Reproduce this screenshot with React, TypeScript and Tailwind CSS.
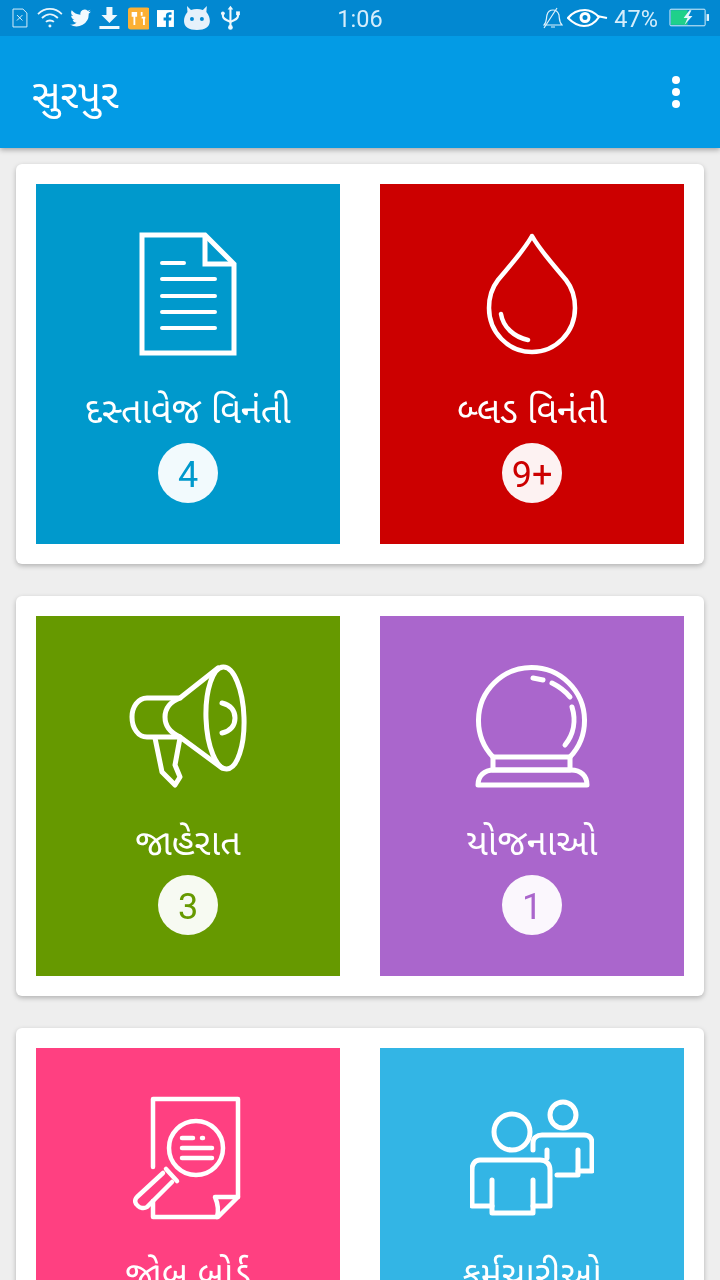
import React from "react";

const S = { fill: "none", stroke: "white", strokeWidth: 5, strokeLinejoin: "round" as const, strokeLinecap: "round" as const };

function Slot({ children }: { children: React.ReactNode }) {
  return (
    <svg width="124" height="124" viewBox="0 0 124 124" {...S} className="block">
      {children}
    </svg>
  );
}

const DocIcon = () => (
  <Slot>
    <g strokeLinecap="butt" strokeLinejoin="miter">
      <path d="M16 3H79L108 32V121H16Z" />
      <path d="M79 3V32H108" />
    </g>
    <g strokeWidth="4">
      <path d="M36 31H58M36 47H89M36 64H89M36 80H89M36 96H89" />
    </g>
  </Slot>
);

const DropIcon = () => (
  <Slot>
    <path d="M62 4C53 20 36 38 28 48C21 57 19 66 19 76C19 100 38 120 62 120C86 120 105 100 105 76C105 66 103 57 96 48C88 38 71 20 62 4Z" strokeWidth="4.500" />
    <path d="M31 82C33 95 44 105 58 108" strokeWidth="4.500" />
  </Slot>
);

const MegaphoneIcon = () => (
  <Slot>
    <ellipse cx="99" cy="54" rx="19" ry="51" transform="rotate(-2 99 54)" />
    <path d="M92 4L54 34C44 38 39 45 39 53C39 62 45 69 54 73L96 104" />
    <path d="M54 34H21C12 34 6 43 6 53C6 64 12 73 21 73H54" />
    <path d="M29 74L36 108L49 121L54 113L49 101L54 74" />
    <path d="M96 39C105 41 109 47 109 54C109 61 105 67 96 69" />
  </Slot>
);

const GlobeIcon = () => (
  <Slot>
    <path d="M23 93A53 53 0 1 1 100 93" />
    <path d="M23 93H100V106H23Z" />
    <path d="M8 121C8 112 14 106 24 106H101C111 106 117 112 117 121Z" />
    <path d="M63 14L73 16M82 19C90 23 96 28 100 33M102 43C106 56 104 70 95 81" />
  </Slot>
);

const JobIcon = () => (
  <Slot>
    <g strokeWidth="4.500">
      <path d="M27 71V3H112V101L92 121H27V105" />
      <path d="M112 101H89C92 108 93 114 91 121" />
      <circle cx="70" cy="52" r="27" />
      <path d="M56 42H67M76 42H77M56 52H86M56 62H86" />
      <path d="M37 77L11 101C8 104 9 108 12 110C14 112 18 113 21 111L46 86" />
      <path d="M40 73L51 85" />
    </g>
  </Slot>
);

const PeopleIcon = () => (
  <Slot>
    <circle cx="42" cy="36" r="18" />
    <circle cx="93" cy="19" r="13" />
    <path d="M22 110H2V74C2 68 5 64 10 64H70C76 64 80 68 80 74V110H63" />
    <path d="M22 84V117H63V84" />
    <path d="M63 54V47C63 42 67 39 72 39H114C119 39 122 42 122 47V75H108" />
    <path d="M108 54V79H87M77 54V62" />
  </Slot>
);

function Tile({ color, text, label, badge, icon }: { color: string; text: string; label: string; badge?: string; icon: React.ReactNode }) {
  return (
    <div className={`${color} h-[360px] flex flex-col items-center pt-[48px]`}>
      {icon}
      <div className="mt-[29px] h-[60px] text-[36px] leading-[60px] text-white whitespace-nowrap">{label}</div>
      {badge && (
        <div className={`-mt-[2px] w-[60px] h-[60px] rounded-full bg-white/95 flex items-center justify-center pt-[3px] text-[36px] leading-none font-['Roboto',sans-serif] ${text}`}>
          {badge}
        </div>
      )}
    </div>
  );
}

function Card({ children }: { children: React.ReactNode }) {
  return (
    <div className="bg-white rounded-[6px] shadow-[0_2px_5px_rgba(0,0,0,0.25)] p-[20px] grid grid-cols-2 gap-[40px]">
      {children}
    </div>
  );
}

function StatusLeft() {
  return (
    <div className="flex items-center pl-[12px]">
      <svg width="16" height="20" viewBox="0 0 16 20" fill="none" stroke="#d9eefa" strokeWidth="1">
        <path d="M1 1H11L15 5V19H1Z" />
        <path d="M5 7L10.500 12.500M10.500 7L5 12.500" />
      </svg>
      <svg width="26" height="22" viewBox="0 0 26 22" fill="none" stroke="#e8f5fc" strokeWidth="1.800" className="ml-[9px]">
        <path d="M1 7C8 0 18 0 25 7M5 11C10 6 16 6 21 11M9 15C11 13 15 13 17 15" />
        <circle cx="13" cy="19" r="1.500" fill="#e8f5fc" stroke="none" />
      </svg>
      <svg width="21" height="18" viewBox="0 0 24 20" fill="#f2fafe" className="ml-[7px]">
        <path d="M24 2.400c-.9.400-1.800.7-2.800.8 1-.6 1.800-1.600 2.200-2.700-1 .6-2 1-3.100 1.200A4.900 4.900 0 0 0 12 6.200C8 6 4.400 4.100 2 1.100.7 3.300 1.300 6.200 3.500 7.700c-.8 0-1.600-.2-2.200-.6 0 2.400 1.700 4.400 3.900 4.900-.7.200-1.500.2-2.200.1.600 2 2.400 3.400 4.600 3.400A9.900 9.900 0 0 1 0 17.500 14 14 0 0 0 21.500 5c1-.7 1.800-1.600 2.500-2.600z" />
      </svg>
      <svg width="21" height="24" viewBox="0 0 20 24" fill="#eef8fd" className="ml-[8px]">
        <path d="M7 1H13V9H18L10 17L2 9H7Z" />
        <rect x="0" y="20" width="20" height="3" />
      </svg>
      <svg width="22" height="23" viewBox="0 0 24 24" className="ml-[8px]">
        <rect width="24" height="24" rx="3" fill="#fbb034" />
        <path d="M7 5V19M5 5V9H9V5M15 5V9M17.500 11V19M15 11H19" stroke="white" strokeWidth="2" fill="none" />
      </svg>
      <svg width="17" height="17" viewBox="0 0 18 18" className="ml-[8px]">
        <rect width="18" height="18" fill="white" />
        <path d="M12.500 18V11H15L15.400 8H12.500V6.500C12.500 5.500 12.900 5 14 5H15.500V2.400C14 2.200 9.500 1.700 9.500 6V8H7V11H9.500V18Z" fill="#0288d1" />
      </svg>
      <svg width="26" height="26" viewBox="0 0 26 26" className="ml-[10px]">
        <path d="M3 1L7 5C11 3.500 15 3.500 19 5L23 1L22.500 7C25 10 26 13 26 16C26 22 21 25 13 25C5 25 0 22 0 16C0 13 1 10 3.500 7Z" fill="#e6f1fb" />
        <circle cx="8" cy="14" r="2" fill="#0288d1" />
        <circle cx="18" cy="14" r="2" fill="#0288d1" />
      </svg>
      <svg width="19" height="26" viewBox="0 0 20 26" fill="none" stroke="#eef8fd" strokeWidth="2.200" className="ml-[11px]">
        <path d="M10 3V23" />
        <path d="M10 0L13 4H7Z" fill="#eef8fd" stroke="none" />
        <circle cx="10" cy="23" r="2.500" fill="#eef8fd" stroke="none" />
        <path d="M2 8V11C2 14 5 15 10 17C15 15 18 14 18 11V9" />
        <circle cx="2" cy="8" r="2" fill="#eef8fd" stroke="none" />
        <rect x="16" y="6" width="4" height="4" fill="#eef8fd" stroke="none" />
      </svg>
    </div>
  );
}

function StatusRight() {
  return (
    <div className="flex items-center pr-[10px]">
      <svg width="20" height="22" viewBox="0 0 20 22" fill="none" stroke="#e0f2fc" strokeWidth="1.200">
        <path d="M1 18C4 15 3 12 4 8C5 4 8 3 10 3C13 3 15 5 16 8C16.500 12 16 15 19 18H1Z" />
        <path d="M8 20H12M1 21L14 1" />
      </svg>
      <svg width="42" height="22" viewBox="0 0 42 22" className="ml-[4px]" fill="none" stroke="white" strokeWidth="2.200">
        <path d="M1 11C5 6 10 3 18 3C25 3 29 7 32 10C28 16 24 19 17 19C10 19 5 15 1 11Z" />
        <path d="M30 9L40 11" />
        <circle cx="18" cy="10.500" r="4" strokeWidth="3" />
      </svg>
      <span className="ml-[5px] pt-[3px] text-[23.500px] leading-none text-[#d6edfb] font-['Roboto',sans-serif]">47%</span>
      <svg width="41" height="20" viewBox="0 0 42 20" className="ml-[11px]" fill="none">
        <rect x="1" y="1" width="36" height="17" rx="1" stroke="#e0f2fc" />
        <rect x="2" y="2" width="17" height="15" fill="#1fd08a" />
        <path d="M21 2L15 10H19L16 17L24 8H20L23 2Z" fill="#e6f6fc" />
        <rect x="38.500" y="6" width="2.500" height="7" fill="#e0f2fc" />
      </svg>
    </div>
  );
}

export default function App() {
  return (
    <div className="w-[720px] h-[1280px] overflow-hidden bg-[#eeeeee] blur-[0.5px] font-['Noto_Sans_Gujarati','Noto_Sans','Lato','Liberation_Sans',sans-serif]">
      <div className="bg-[#039be5] shadow-[0_2px_5px_rgba(0,0,0,0.3)] relative">
        <div className="h-[36px] bg-[#0288d1] grid grid-cols-3 items-center">
          <StatusLeft />
          <div className="text-center pt-[3px] text-[23.500px] leading-none text-[#d6edfb] font-['Roboto',sans-serif]">1:06</div>
          <div className="flex justify-end"><StatusRight /></div>
        </div>
        <div className="h-[112px] flex items-center justify-between pl-[32px] pr-[40px]">
          <div className="text-[40px] text-white leading-none pt-[12px]">સુરપુર</div>
          <div className="flex flex-col gap-[4px]">
            <div className="w-[8px] h-[8px] rounded-full bg-white" />
            <div className="w-[8px] h-[8px] rounded-full bg-white" />
            <div className="w-[8px] h-[8px] rounded-full bg-white" />
          </div>
        </div>
      </div>
      <div className="flex flex-col gap-[32px] pt-[16px] px-[16px]">
        <Card>
          <Tile color="bg-[#0099cc]" text="text-[#0099cc]" label="દસ્તાવેજ વિનંતી" badge="4" icon={<DocIcon />} />
          <Tile color="bg-[#cc0000]" text="text-[#cc0000]" label="બ્લડ વિનંતી" badge="9+" icon={<DropIcon />} />
        </Card>
        <Card>
          <Tile color="bg-[#669900]" text="text-[#669900]" label="જાહેરાત" badge="3" icon={<MegaphoneIcon />} />
          <Tile color="bg-[#aa66cc]" text="text-[#aa66cc]" label="યોજનાઓ" badge="1" icon={<GlobeIcon />} />
        </Card>
        <Card>
          <Tile color="bg-[#ff4081]" text="text-[#ff4081]" label="જોબ બોર્ડ" icon={<JobIcon />} />
          <Tile color="bg-[#33b5e5]" text="text-[#33b5e5]" label="કર્મચારીઓ" icon={<PeopleIcon />} />
        </Card>
      </div>
    </div>
  );
}
